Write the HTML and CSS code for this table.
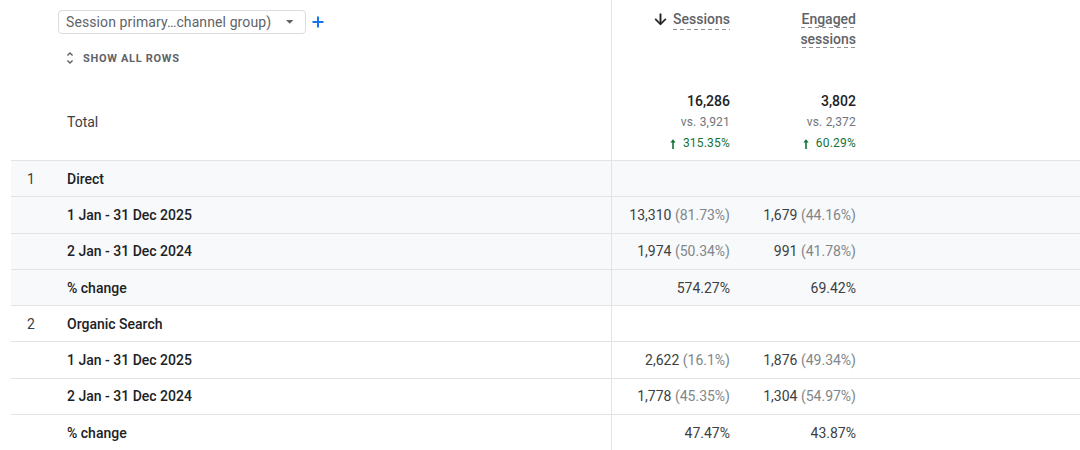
FILE: index.html
```html
<!DOCTYPE html>
<html>
<head>
<meta charset="utf-8">
<link rel="stylesheet" href="styles.css">
</head>
<body>
<div class="report">
  <div class="grid head">
    <div class="head-dim">
      <div class="dim-controls">
        <div class="dim-select">
          <span>Session primary…channel group)</span>
          <svg class="caret" width="8" height="4" viewBox="0 0 8 4"><path d="M0 0h7.4L3.7 3.7z" fill="#5f6368"/></svg>
        </div>
        <svg class="plus" width="14" height="14" viewBox="0 0 14 14"><path d="M7 1.5v11M1.5 7h11" stroke="#1a73e8" stroke-width="2" fill="none"/></svg>
      </div>
      <div class="show-all">
        <svg width="16" height="16" viewBox="0 0 24 24"><path d="M12 5.83L15.17 9l1.41-1.41L12 3 7.41 7.59 8.83 9 12 5.83zm0 12.34L8.83 15l-1.41 1.41L12 21l4.59-4.59L15.17 15 12 18.17z" fill="#5f6368"/></svg>
        <span>SHOW ALL ROWS</span>
      </div>
      <div class="total-label">Total</div>
    </div>
    <div class="head-metric">
      <div class="metric-title">
        <svg class="sort" width="17" height="17" viewBox="0 0 24 24"><path d="M20 12l-1.41-1.41L13 16.17V4h-2v12.17l-5.58-5.59L4 12l8 8 8-8z" fill="#202124" stroke="#202124" stroke-width="0.6"/></svg><span class="dashed">Sessions</span>
      </div>
      <div class="totals">
        <div class="total-value">16,286</div>
        <div class="total-prev">vs. 3,921</div>
        <div class="total-change"><svg width="12" height="12" viewBox="0 0 12 12"><path d="M6 11V3.5" stroke="#137333" stroke-width="1.6"/><path d="M3.3 4.6L6 1.2l2.7 3.4z" fill="#137333"/></svg><span>315.35%</span></div>
      </div>
    </div>
    <div class="head-metric second">
      <div class="metric-title narrow">
        <span class="dashed">Engaged sessions</span>
      </div>
      <div class="totals">
        <div class="total-value">3,802</div>
        <div class="total-prev">vs. 2,372</div>
        <div class="total-change"><svg width="12" height="12" viewBox="0 0 12 12"><path d="M6 11V3.5" stroke="#137333" stroke-width="1.6"/><path d="M3.3 4.6L6 1.2l2.7 3.4z" fill="#137333"/></svg><span>60.29%</span></div>
      </div>
    </div>
    <div></div>
  </div>

  <div class="group shaded">
    <div class="grid row">
      <div class="c-num">1</div><div class="c-label">Direct</div>
      <div class="c-val"></div><div class="c-val"></div><div></div>
    </div>
    <div class="grid row">
      <div class="c-num"></div><div class="c-label">1 Jan - 31 Dec 2025</div>
      <div class="c-val">13,310<span class="pct">&nbsp;(81.73%)</span></div><div class="c-val">1,679<span class="pct">&nbsp;(44.16%)</span></div><div></div>
    </div>
    <div class="grid row">
      <div class="c-num"></div><div class="c-label">2 Jan - 31 Dec 2024</div>
      <div class="c-val">1,974<span class="pct">&nbsp;(50.34%)</span></div><div class="c-val">991<span class="pct">&nbsp;(41.78%)</span></div><div></div>
    </div>
    <div class="grid row">
      <div class="c-num"></div><div class="c-label">% change</div>
      <div class="c-val">574.27%</div><div class="c-val">69.42%</div><div></div>
    </div>
  </div>

  <div class="group">
    <div class="grid row">
      <div class="c-num">2</div><div class="c-label">Organic Search</div>
      <div class="c-val"></div><div class="c-val"></div><div></div>
    </div>
    <div class="grid row">
      <div class="c-num"></div><div class="c-label">1 Jan - 31 Dec 2025</div>
      <div class="c-val">2,622<span class="pct">&nbsp;(16.1%)</span></div><div class="c-val">1,876<span class="pct">&nbsp;(49.34%)</span></div><div></div>
    </div>
    <div class="grid row">
      <div class="c-num"></div><div class="c-label">2 Jan - 31 Dec 2024</div>
      <div class="c-val">1,778<span class="pct">&nbsp;(45.35%)</span></div><div class="c-val">1,304<span class="pct">&nbsp;(54.97%)</span></div><div></div>
    </div>
    <div class="grid row">
      <div class="c-num"></div><div class="c-label">% change</div>
      <div class="c-val">47.47%</div><div class="c-val">43.87%</div><div></div>
    </div>
  </div>
</div>
</body>
</html>
```

FILE: styles.css
```css
html, body {
  margin: 0;
  padding: 0;
  background: #ffffff;
}

body {
  font-family: Roboto, "Noto Sans", sans-serif;
  color: #3c4043;
  overflow: hidden;
}

.report {
  margin-left: 11px;
}

.grid {
  display: grid;
  grid-template-columns: 600px 135px 126px 1fr;
}

.head {
  height: 161px;
  box-sizing: border-box;
  border-bottom: 1px solid #e3e3e3;
}

.head-dim {
  display: flex;
  flex-direction: column;
  padding: 10px 0 7px 0;
}

.dim-controls {
  display: flex;
  align-items: center;
  margin-left: 47px;
}

.dim-select {
  width: 248px;
  height: 24px;
  box-sizing: border-box;
  border: 1px solid #dadce0;
  border-radius: 4px;
  display: flex;
  align-items: center;
  justify-content: space-between;
  padding: 0 11px 0 7px;
  font-size: 14px;
  letter-spacing: 0.1px;
  color: #5f6368;
}

.plus {
  margin-left: 5px;
}

.show-all {
  display: flex;
  align-items: center;
  margin-left: 51px;
  margin-top: 16px;
  height: 16px;
  font-size: 11px;
  font-weight: 700;
  letter-spacing: 0.7px;
  color: #5f6368;
}

.show-all svg {
  margin-right: 5px;
}

.total-label {
  margin-top: auto;
  height: 63px;
  display: flex;
  align-items: center;
  padding-left: 56px;
  font-size: 14px;
  color: #3c4043;
}

.head-metric {
  display: flex;
  flex-direction: column;
  align-items: flex-end;
  padding: 9px 16px 6px 0;
  border-left: 1px solid #e3e3e3;
  text-align: right;
}

.head-metric.second {
  border-left: none;
}

.metric-title {
  display: flex;
  align-items: center;
  font-size: 14px;
  font-weight: 500;
  line-height: 20px;
  color: #5f6368;
}

.metric-title.narrow {
  display: block;
  width: 60px;
}

.sort {
  margin-right: 4px;
}

.dashed {
  padding-bottom: 1px;
  background-image: linear-gradient(to right, #8d9196 55%, transparent 55%);
  background-size: 7px 1px;
  background-repeat: repeat-x;
  background-position: left bottom;
}

.totals {
  margin-top: auto;
  display: flex;
  flex-direction: column;
  align-items: flex-end;
}

.total-value,
.total-prev,
.total-change {
  height: 21px;
  line-height: 21px;
}

.total-value {
  font-size: 14px;
  font-weight: 500;
  color: #202124;
}

.total-prev {
  font-size: 12px;
  letter-spacing: 0.2px;
  color: #70757a;
}

.total-change {
  display: flex;
  align-items: center;
  font-size: 12px;
  letter-spacing: 0.2px;
  color: #137333;
}

.total-change svg {
  margin-right: 4px;
}

.shaded {
  background: #f8f9fa;
}

.row {
  height: 36.3px;
  box-sizing: border-box;
  border-bottom: 1px solid #e3e3e3;
  font-size: 14px;
  grid-template-columns: 56px 544px 135px 126px 1fr;
}

.c-num {
  display: flex;
  align-items: center;
  padding-left: 16px;
  color: #3c4043;
}

.c-label {
  display: flex;
  align-items: center;
  font-weight: 500;
  color: #202124;
}

.c-val {
  display: flex;
  align-items: center;
  justify-content: flex-end;
  padding-right: 16px;
  color: #3c4043;
}

.c-val:nth-child(3) {
  border-left: 1px solid #e3e3e3;
}

.pct {
  color: #80868b;
}
```
